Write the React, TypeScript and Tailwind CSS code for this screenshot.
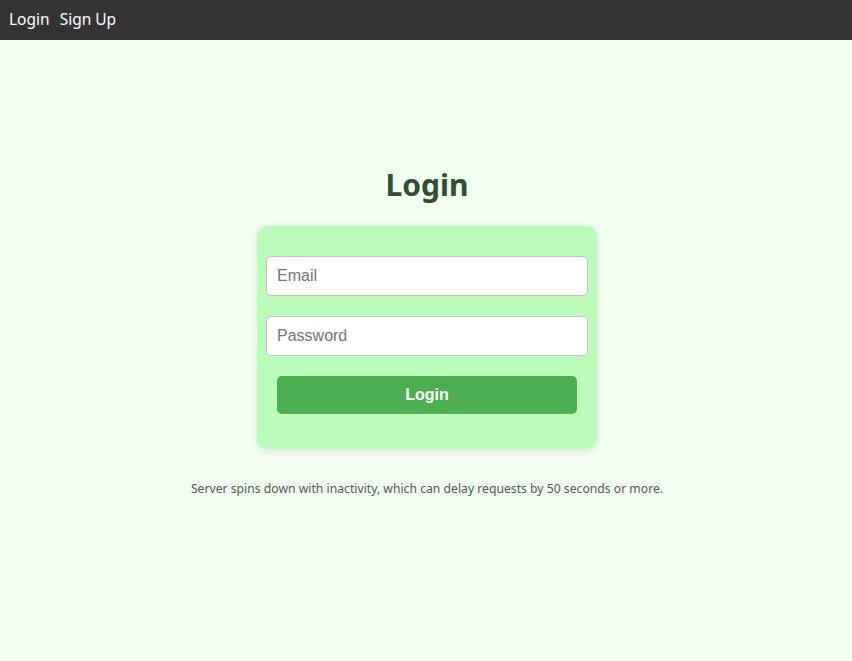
import React from "react"

const sans = "font-['Segoe_UI','Noto_Sans',sans-serif]"

const Navbar = () => (
    <nav className={`flex h-10 items-center gap-[10px] bg-[#333333] px-[9px] text-[15.5px] text-white ${sans}`}>
        <a href="#">Login</a>
        <a href="#">Sign Up</a>
    </nav>
)

const LoginForm = () => (
    <div className="flex w-[340px] flex-col items-center rounded-[10px] bg-[#bbfcbb] pt-[30px] pb-[35px] shadow-[0_2px_10px_rgba(0,0,0,0.1)]">
        <input
            type="email"
            placeholder="Email"
            className="h-10 w-[322px] rounded-[5px] border border-[#c4c4c4] bg-white px-[10px] font-['Liberation_Sans',Arial,sans-serif] text-[16px] text-[#333] outline-none placeholder:text-[#757575]"
        />
        <input
            type="password"
            placeholder="Password"
            className="mt-5 h-10 w-[322px] rounded-[5px] border border-[#c4c4c4] bg-white px-[10px] font-['Liberation_Sans',Arial,sans-serif] text-[16px] text-[#333] outline-none placeholder:text-[#757575]"
        />
        <button className="mt-5 h-[38px] w-[300px] rounded-[5px] bg-[#4caf50] font-['Liberation_Sans',Arial,sans-serif] text-[16px] font-bold text-white">
            Login
        </button>
    </div>
)

export default function App() {
    return (
        <div className="min-h-[661px] bg-[#f0fff0]">
            <Navbar />
            <main className="ml-[2px] flex flex-col items-center pt-[126px]">
                <h1 className={`h-[38px] text-[30px] leading-[38px] font-bold text-[#2f4f2f] ${sans}`}>Login</h1>
                <div className="mt-[22px]">
                    <LoginForm />
                </div>
                <p className={`mt-[31px] text-[12.2px] leading-[18px] text-[#555555] ${sans}`}>
                    Server spins down with inactivity, which can delay requests by 50 seconds or more.
                </p>
            </main>
        </div>
    )
}
